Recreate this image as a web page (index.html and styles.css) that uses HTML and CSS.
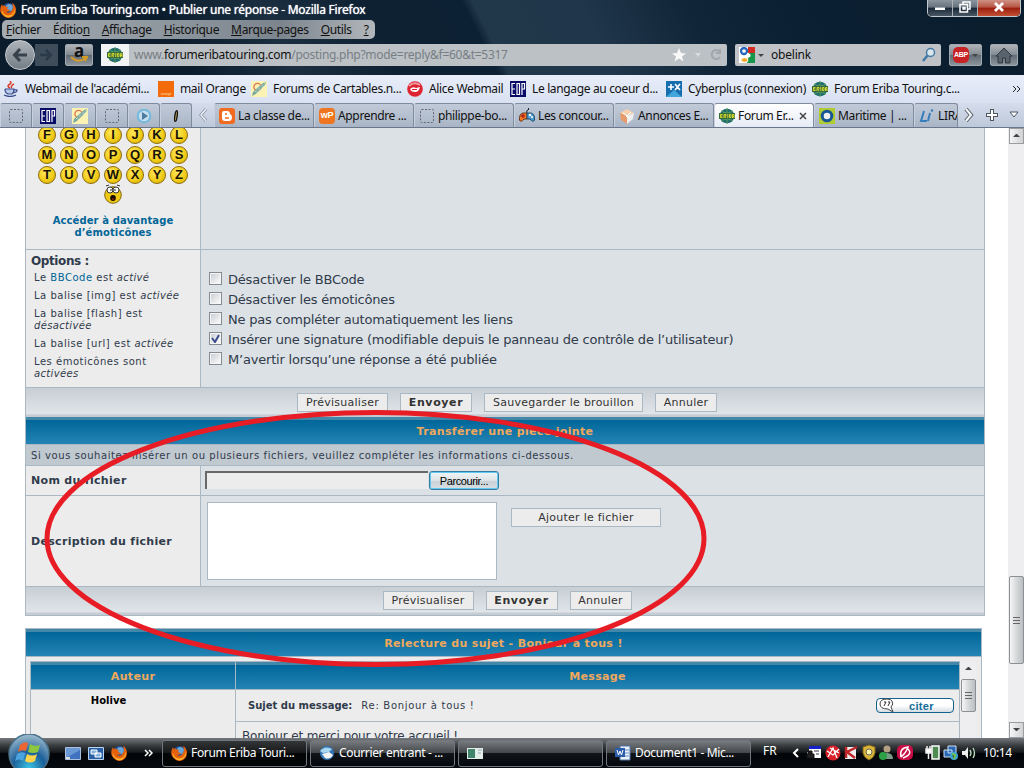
FILE: index.html
```html
<!DOCTYPE html>
<html lang="fr">

<head>
    <meta charset="UTF-8">
    <title>Forum Eriba Touring.com • Publier une réponse</title>
    <link rel="stylesheet" href="styles.css">
</head>

<body>
    <svg class="sprite">
        <symbol id="firefox" viewBox="0 0 16 16">
            <circle cx="8.4" cy="7.5" r="6.4" fill="#234c8d"/>
            <circle cx="9.3" cy="5.6" r="3.6" fill="#69a5d7"/>
            <path d="M2 2Q-1 7 1 11Q4 16 9 16Q16 15 16 7Q15 2 12 1Q14 5 12 8Q10 12 6 10Q9 10 10 8L7 7L8 5Q5 5 4 3Q3 4 3 5Z" fill="#e5610b"/>
            <path d="M2 8Q3 13 8 13.500Q13 14 15 7Q16 11 12 14Q7 17 3 12.500Q1 10 2 8" fill="#ffb52c"/>
        </symbol>
        <symbol id="eriba" viewBox="0 0 16 16">
            <circle cx="8" cy="8" r="7.3" fill="#1f6d6d"/>
            <path d="M8 0V16M2 3Q8 7 14 3M2 13Q8 9 14 13" fill="none" stroke="#5a9b60"/>
            <path d="M0 5H16V11H0Z" fill="#386b3a"/>
            <path d="M3.500 6.500H1.500V9.500H3.500M1.500 8H3.500M5 10V6.500H7V8H5.500L7 10M8.800 6V10M10.500 6.500V9.500H12V6.500ZM13.500 10V6.500H15V10M13.500 8.500H15" fill="none" stroke="#dfdf32" stroke-width=".9"/>
        </symbol>
        <symbol id="blank" viewBox="0 0 16 16">
            <rect x="1.5" y="1.5" width="13" height="13" rx="1" fill="none" stroke="#5f6874" stroke-dasharray="2 1.5"/>
        </symbol>
        <symbol id="edp" viewBox="0 0 16 16">
            <path d="M0 0H16V16H0Z" fill="#080c68"/>
            <path d="M5 2.5H2V13.5H5M2 8H5M7 2.5V13.5H9.5V2.5ZM12 14V2.5H14.5V8H12" fill="none" stroke="#fff" stroke-width="1.2"/>
        </symbol>
        <symbol id="pencil" viewBox="0 0 16 16">
            <path d="M0 0H16V16H0Z" fill="#fbf3b4"/>
            <circle cx="6.500" cy="6" r="3.6" fill="none" stroke="#df7850" stroke-width="1.3"/>
            <path d="M1 15L2 11L12 2L15 1L14 4L5 13Z" fill="#7aa99c"/>
            <path d="M4 11L14 2M5 12.500L14 4" stroke="#dceae3" stroke-dasharray="1 1"/>
        </symbol>
        <symbol id="java" viewBox="0 0 16 16">
            <path d="M7 7Q3 5 7 3Q9 2 7 0M9 7Q7 5 11 3" fill="none" stroke="#d93c2b" stroke-width="1.5"/>
            <path d="M2 8H11Q11 12 9 13H5Q2 12 2 8M11 9Q16 8 13 11L10 12M1 14Q7 17 13 14" fill="#b9c9ea" stroke="#394c8c" stroke-width="1.2"/>
        </symbol>
        <symbol id="play" viewBox="0 0 16 16">
            <circle cx="8" cy="8" r="6.3" fill="#c4deed" stroke="#74b9dc" stroke-width="2"/>
            <path d="M6 4L12 8L6 12Z" fill="#4d7c9f"/>
        </symbol>
        <symbol id="blogger" viewBox="0 0 16 16">
            <rect width="16" height="16" rx="3" fill="#f16b22"/>
            <path d="M5 3H8Q11 3 11 6Q13 7 13 9Q13 13 10 13H6Q3 13 3 10V5Q3 3 5 3" fill="#fff"/>
            <path d="M6 6H8M6 10H10" stroke="#f16b22" stroke-width="1.5"/>
        </symbol>
        <symbol id="gamepad" viewBox="0 0 16 16">
            <path d="M8 5Q7 2 9 2Q11 1 9 0" fill="none" stroke="#222"/>
            <path d="M8 5H4Q0 6 .5 12Q2 15 5 11H8Z" fill="#f07a25" stroke="#67351f"/>
            <path d="M8 5H12Q16 6 15.5 12Q14 15 11 11H8Z" fill="#4b9ed1" stroke="#244b6b"/>
            <path d="M2 8H6M4 6V10" stroke="#b4261c" stroke-width="1.5"/>
            <circle cx="11" cy="7" r="1.2" fill="#fff"/><circle cx="13" cy="9" r="1" fill="#fff"/>
        </symbol>
        <symbol id="cube" viewBox="0 0 16 16">
            <path d="M1 5L8 1L15 5L8 8Z" fill="#f8d0ae"/>
            <path d="M1 5L8 8V16L2 12Z" fill="#e79a6a"/>
            <path d="M15 5L8 8V16L14 11Z" fill="#eee"/>
            <path d="M4 5L11 10M12 4L7 9" stroke="#fff"/>
        </symbol>
        <symbol id="plusx" viewBox="0 0 16 16">
            <path d="M0 0H16V16H0Z" fill="#176eae"/>
            <path d="M0 16L8 9L16 16Z" fill="#42a6da"/>
            <path d="M2 6H8M5 3V9M9 3L14 9M14 3L9 9" stroke="#fff" stroke-width="1.6"/>
        </symbol>
        <symbol id="alice" viewBox="0 0 16 16">
            <circle cx="8" cy="8" r="7.8" fill="#dd2432"/>
            <path d="M2 5Q7 0 13 4" fill="none" stroke="#f19b9c" stroke-width="2"/>
            <path d="M3 8Q6 5 9 7L13 6Q12 11 8 11Q4 11 3 8" fill="#fff"/>
            <path d="M5 8.500H10" stroke="#dd2432"/>
        </symbol>
        <symbol id="google" viewBox="0 0 16 16">
            <path d="M0 0H16V16H0Z" fill="#fff"/>
            <path d="M9 0H16V6H9Z" fill="#d52b25"/><path d="M10 6H16V16H8Z" fill="#15964a"/>
            <circle cx="5" cy="4" r="3" fill="#fff" stroke="#2866ba" stroke-width="2.3"/>
            <path d="M8 7Q13 8 9 10" fill="none" stroke="#fff" stroke-width="2"/>
            <ellipse cx="5.5" cy="13" rx="3.5" ry="2.3" fill="#f5a623" stroke="#fff"/>
        </symbol>
        <symbol id="shocked" viewBox="0 0 18 20">
            <circle cx="9" cy="11" r="8.3" fill="#edc815" stroke="#84670a"/>
            <circle cx="6" cy="6" r="3" fill="#fff" stroke="#333"/><circle cx="12" cy="6" r="3" fill="#fff" stroke="#333"/>
            <circle cx="7" cy="6" r=".8"/><circle cx="11" cy="6" r=".8"/>
            <path d="M2 2L5 1M13 1L16 2" stroke="#333"/>
            <ellipse cx="9" cy="14" rx="2.8" ry="3" fill="#160800"/><path d="M8 15H10" stroke="#c52e15"/>
        </symbol>
    </svg>

    <div class="chrome">
        <div class="titlebar">
            <svg class="icon"><use href="#firefox"/></svg>
            <span class="window-title">Forum Eriba Touring.com • Publier une réponse - Mozilla Firefox</span>
            <div class="window-buttons">
                <span><svg width="14" height="14"><path d="M2 7.5H12V10H2Z" fill="#fff"/></svg></span>
                <span><svg width="14" height="14" fill="none" stroke="#fff" stroke-width="1.5"><path d="M5 4V2H12V9H10M2 4.500H9.500V12H2ZM5 7.500H7V9H5Z"/></svg></span>
                <span class="close"><svg width="14" height="14"><path d="M3 3L11 11M11 3L3 11" stroke="#fff" stroke-width="2.800"/></svg></span>
            </div>
        </div>
        <div class="menubar">
            <span><u>F</u>ichier</span><span>Éditio<u>n</u></span><span><u>A</u>ffichage</span><span><u>H</u>istorique</span><span><u>M</u>arque-pages</span><span><u>O</u>utils</span><span><u>?</u></span>
        </div>
        <div class="navbar">
            <div class="nav-arrows">
                <span class="back"><svg width="18" height="18"><path d="M16 9H4M9 3L3.500 9L9 15" fill="none" stroke="#38424c" stroke-width="3"/></svg></span>
                <span class="forward"><svg width="16" height="16"><path d="M2 8H12M8 3L13 8L8 13" fill="none" stroke="#2b3a48" stroke-width="2.500"/></svg></span>
            </div>
            <div class="tool amazon"><b>a</b><svg width="18" height="8"><path d="M1 1Q8 8 16 2M12 1H17L15 5" fill="none" stroke="#d49b26" stroke-width="2"/></svg></div>
            <div class="urlbar">
                <div class="site"><svg class="icon"><use href="#eriba"/></svg></div>
                <span class="url">www.<b>forumeribatouring.com</b>/posting.php?mode=reply&amp;f=60&amp;t=5317</span>
                <svg class="url-icons" width="56" height="18"><path d="M8 2L10 7L15 7.500L11 10.500L12.500 15.500L8 12.500L3.500 15.500L5 10.500L1 7.500L6 7Z" fill="#f8f8f8"/><path d="M24 7H30L27 11Z" fill="#d9dcde"/><path d="M48 5A4.500 4.500 0 1 0 49 11M49 3V7H45" fill="none" stroke="#a0a6ac" stroke-width="2"/></svg>
            </div>
            <div class="search">
                <svg class="icon"><use href="#google"/></svg><i class="caret"></i><span>obelink</span>
                <svg width="16" height="16"><circle cx="9.500" cy="5.500" r="4" fill="#dbe5ec" stroke="#4379a5" stroke-width="1.500"/><path d="M6.500 8.500L2 14" stroke="#4379a5" stroke-width="2.500"/></svg>
            </div>
            <div class="tool abp"><b>ABP</b><i class="caret"></i></div>
            <div class="tool home"><svg width="18" height="17"><path d="M1 9L9 1L17 9H15V16H10.500V11H7.500V16H3V9Z" fill="#59636d" stroke="#303943"/></svg></div>
        </div>
    </div>

    <div class="bookmarks">
        <div><svg class="icon"><use href="#java"/></svg><span>Webmail de l'académi...</span></div>
        <div><i class="orange">orange</i><span>mail Orange</span></div>
        <div><svg class="icon"><use href="#pencil"/></svg><span>Forums de Cartables.n...</span></div>
        <div><svg class="icon"><use href="#alice"/></svg><span>Alice Webmail</span></div>
        <div><svg class="icon"><use href="#edp"/></svg><span>Le langage au coeur d...</span></div>
        <div><svg class="icon"><use href="#plusx"/></svg><span>Cyberplus (connexion)</span></div>
        <div><svg class="icon"><use href="#eriba"/></svg><span>Forum Eriba Touring.c...</span></div>
        <svg class="more" width="9" height="9"><path d="M1 1L4 4L1 7M5 1L8 4L5 7" fill="none" stroke="#222"/></svg>
    </div>

    <div class="tabs">
        <div class="pin"><svg class="icon"><use href="#blank"/></svg></div>
        <div class="pin"><svg class="icon"><use href="#edp"/></svg></div>
        <div class="pin"><svg class="icon"><use href="#pencil"/></svg></div>
        <div class="pin"><svg class="icon"><use href="#blank"/></svg></div>
        <div class="pin"><svg class="icon"><use href="#play"/></svg></div>
        <div class="pin"><svg width="16" height="16"><ellipse cx="8" cy="8" rx="1.200" ry="5.500" fill="#b69e55" stroke="#111" stroke-width="1.300" transform="rotate(8 8 8)"/></svg></div>
        <div class="scroll-left"><svg width="12" height="16"><path d="M9 2L4 8L9 14" fill="none" stroke="#8791a0" stroke-width="3"/><path d="M9 2L4 8L9 14" fill="none" stroke="#edf1f7" stroke-width="1.500"/></svg></div>
        <div class="tab"><svg class="icon"><use href="#blogger"/></svg><span>La classe de...</span></div>
        <div class="tab"><i class="wp">wP</i><span>Apprendre ...</span></div>
        <div class="tab"><svg class="icon"><use href="#blank"/></svg><span>philippe-bo...</span></div>
        <div class="tab"><svg class="icon"><use href="#gamepad"/></svg><span>Les concour...</span></div>
        <div class="tab"><svg class="icon"><use href="#cube"/></svg><span>Annonces E...</span></div>
        <div class="tab active"><svg class="icon"><use href="#eriba"/></svg><span>Forum Er...</span><svg class="tab-close" width="8" height="8"><path d="M1 1L7 7M7 1L1 7" stroke="#444" stroke-width="1.500"/></svg></div>
        <div class="tab"><svg class="icon" viewBox="0 0 16 16"><path d="M0 0H16V16H0Z" fill="#b1cc32"/><circle cx="8" cy="8" r="4.800" fill="#eee" stroke="#185693" stroke-width="3"/></svg><span>Maritime | ...</span></div>
        <div class="tab cut"><svg class="icon" viewBox="0 0 16 16"><path d="M5 3L2 13H8M11 5L9 13M12 2L14 3" fill="none" stroke="#367dbc" stroke-width="2"/></svg><span>LIRA</span></div>
        <svg class="tab-tools" width="66" height="25"><path d="M8 6L13 12L8 18" fill="none" stroke="#59616c" stroke-width="4"/><path d="M8 6L13 12L8 18" fill="none" stroke="#f7f9fc" stroke-width="2"/><path d="M28 12H40M34 6V18" stroke="#4d5661" stroke-width="4"/><path d="M29 12H39M34 7V17" stroke="#fff" stroke-width="2"/><path d="M52 9H60L56 14Z" fill="#fff" stroke="#4d5661"/></svg>
    </div>

    <div class="viewport">
        <div class="page">
            <div class="post-form">
                <div class="row smilies-row">
                    <div class="label smilies">
                        <div class="balls">
                            <b>F</b><b>G</b><b>H</b><b>I</b><b>J</b><b>K</b><b>L</b>
                            <b>M</b><b>N</b><b>O</b><b>P</b><b>Q</b><b>R</b><b>S</b>
                            <b>T</b><b>U</b><b>V</b><b>W</b><b>X</b><b>Y</b><b>Z</b>
                        </div>
                        <svg class="shocked" width="18" height="20"><use href="#shocked"/></svg>
                        <a class="more-smilies">Accéder à davantage<br>d’émoticônes</a>
                    </div>
                    <div class="field"></div>
                </div>
                <div class="row options-row">
                    <div class="label options">
                        <h4>Options :</h4>
                        <p>Le <a>BBCode</a> est <em>activé</em></p>
                        <p>La balise [img] est <em>activée</em></p>
                        <p>La balise [flash] est<br><em>désactivée</em></p>
                        <p>La balise [url] est <em>activée</em></p>
                        <p>Les émoticônes sont<br><em>activées</em></p>
                    </div>
                    <div class="field checks">
                        <label><i class="box"></i>Désactiver le BBCode</label>
                        <label><i class="box"></i>Désactiver les émoticônes</label>
                        <label><i class="box"></i>Ne pas compléter automatiquement les liens</label>
                        <label><i class="box"><svg width="9" height="9"><path d="M1 4L4 8L8 1" fill="none" stroke="#3b4d8e" stroke-width="2"/></svg></i>Insérer une signature (modifiable depuis le panneau de contrôle de l’utilisateur)</label>
                        <label><i class="box"></i>M’avertir lorsqu’une réponse a été publiée</label>
                    </div>
                </div>
                <div class="actions first">
                    <button class="w-preview">Prévisualiser</button>
                    <button class="w-send">Envoyer</button>
                    <button class="w-draft">Sauvegarder le brouillon</button>
                    <button class="w-cancel">Annuler</button>
                </div>
                <div class="heading">Transférer une pièce jointe</div>
                <div class="info">Si vous souhaitez insérer un ou plusieurs fichiers, veuillez compléter les informations ci-dessous.</div>
                <div class="row file-row">
                    <div class="label"><b>Nom du fichier</b></div>
                    <div class="field"><div class="file-input"></div><button class="browse">Parcourir...</button></div>
                </div>
                <div class="row desc-row">
                    <div class="label"><b>Description du fichier</b></div>
                    <div class="field"><div class="textarea"></div><button class="add-file">Ajouter le fichier</button></div>
                </div>
                <div class="actions last">
                    <button class="w-preview">Prévisualiser</button>
                    <button class="w-send">Envoyer</button>
                    <button class="w-cancel">Annuler</button>
                </div>
            </div>

            <div class="review">
                <div class="heading">Relecture du sujet - Bonjour à tous !</div>
                <div class="review-body">
                    <div class="topic">
                        <div class="author">
                            <div class="heading">Auteur</div>
                            <b>Holive</b>
                        </div>
                        <div class="message">
                            <div class="heading">Message</div>
                            <div class="subject">
                                <b>Sujet du message:</b><span>Re: Bonjour à tous !</span>
                                <div class="quote"><svg width="18" height="16"><path d="M8 1Q1 1 1 6Q1 11 9 11L14 14L12 9Q15 6 13 3Q12 1 8 1Z" fill="#fff" stroke="#444"/><path d="M5 4H7L5 8M9 4H11L9 8" fill="none" stroke="#333"/></svg>citer</div>
                            </div>
                            <p>Bonjour et merci pour votre accueil !</p>
                        </div>
                    </div>
                    <div class="scrollbar inner">
                        <div class="arrow up"></div>
                        <div class="thumb"></div>
                    </div>
                </div>
            </div>
        </div>
        <div class="scrollbar outer">
            <div class="arrow up"></div>
            <div class="thumb"></div>
            <div class="arrow down"></div>
        </div>
    </div>

    <div class="taskbar">
        <svg class="start" width="44" height="34" viewBox="0 0 44 34">
            <defs><radialGradient id="orb" cx=".5" cy=".85" r=".8"><stop offset="0" stop-color="#39c5e6"/><stop offset=".5" stop-color="#1c5f99"/><stop offset="1" stop-color="#94b5c9"/></radialGradient></defs>
            <circle cx="22" cy="20" r="20" fill="url(#orb)" stroke="#49718a" stroke-width="1.500"/>
            <path d="M13 11Q17 7 21 9L19 17Q15 15 11 18Z" fill="#ec6533"/><path d="M23 10Q27 13 33 11L31 18Q26 20 21 18Z" fill="#8dc641"/>
            <path d="M10 20Q14 17 18.500 19L16 27Q12 24 8 27Z" fill="#4ba3df"/><path d="M20 20Q25 23 30 20L28 27Q23 30 18 27Z" fill="#ffd34b"/>
        </svg>
        <div class="quick">
            <svg width="16" height="13"><path d="M.5.5H15.500V12.500H.5Z" fill="#3f71bf" stroke="#a8c1df"/><path d="M1 11L15 3V1H1Z" fill="#6998d5"/><path d="M1 10H5V12H1Z" fill="#ddd"/></svg>
            <svg width="16" height="13"><path d="M.5.5H15.500V12.500H.5Z" fill="#2b5fa5" stroke="#b8d3f0"/><path d="M3 3H9V7H3ZM7 6H13V10H7Z" fill="#82b1df" stroke="#fff"/></svg>
            <svg class="icon"><use href="#firefox"/></svg>
        </div>
        <svg class="more" width="9" height="9"><path d="M1 1L4 4L1 7M5 1L8 4L5 7" fill="none" stroke="#fff" stroke-width="1.500"/></svg>
        <div class="tasks">
            <div class="task current"><svg class="icon"><use href="#firefox"/></svg><span>Forum Eriba Touri...</span></div>
            <div class="task"><svg class="icon" viewBox="0 0 16 16"><circle cx="8" cy="8" r="7" fill="#3376b6"/><path d="M1 6Q6 0 13 4L10 7L4 8Z" fill="#a7d7ef"/><path d="M3 9L10 7L14 10Q11 15 6 13Z" fill="#f4f4f4"/></svg><span>Courrier entrant - ...</span></div>
            <div class="task"><svg class="icon" viewBox="0 0 16 16"><path d="M0 3H16V14H0Z" fill="#e4eee9"/><path d="M1 4H8V13H1Z" fill="#41856d"/><path d="M11 5H15M11 8H14" stroke="#9ab"/></svg></div>
            <div class="task"><svg class="icon" viewBox="0 0 16 16"><path d="M5 1H15V15H5Z" fill="#eaf1fb" stroke="#5076ad"/><path d="M8 5H14M8 8H14M8 11H14" stroke="#6e91c4"/><path d="M0 3H10V12H0Z" fill="#2a5caa"/><path d="M2 5L3.500 10L5 6L6.500 10L8 5" fill="none" stroke="#fff"/></svg><span>Document1 - Mic...</span></div>
        </div>
        <span class="lang">FR</span>
        <svg class="tray" width="192" height="20">
            <path d="M10 6L6 10L10 14" fill="none" stroke="#fff" stroke-width="2"/>
            <path d="M21 3H33V15H19V9H21Z" fill="#fff"/><path d="M21 3H33V6H21Z" fill="#1522c8"/><path d="M20 11V8H24V11M19 11H26V15H19Z" fill="#222" stroke="#111"/><path d="M26 8H31M28 11H31" stroke="#334"/>
            <circle cx="45" cy="10" r="7.500" fill="#d91f29"/><path d="M39 8L45 12L51 6M40 14L45 5L49 15M42 5L51 10" fill="none" stroke="#fff" stroke-width="1.300"/>
            <path d="M57 4H68V16H57Z" fill="#ededed"/><path d="M58 4V15M69 4L59 9L67 15" fill="none" stroke="#bf2526" stroke-width="2.500"/>
            <path d="M75 4L81 2L87 4V10Q86 15 81 17Q76 15 75 10Z" fill="#d9b53c" stroke="#80661c"/><circle cx="81" cy="9" r="3" fill="#fff4ae" stroke="#665"/>
            <circle cx="99" cy="6" r="3.500" fill="#b2a083"/><path d="M92 16Q93 10 99 10Q105 10 105 16Z" fill="#789c86"/><circle cx="95" cy="13" r="4" fill="#2ba044"/>
            <rect x="109" y="2" width="16" height="15" rx="5" fill="#c80e44"/><path d="M113 14Q111 5 120 4Q118 10 113 14M119 5Q126 11 115 15" fill="none" stroke="#fff" stroke-width="1.500"/>
            <path d="M144 3H151V16H144Z" fill="#4f8a50" stroke="#fff" stroke-width="1.500"/><path d="M139 3V6M142 3V6M138 6H143V10H138ZM140.500 10V16" fill="#fff" stroke="#eee" stroke-width="1.500"/>
            <path d="M160 3H168V10H160ZM156 7H164V14H156Z" fill="#2865b2" stroke="#cfe2f5"/><circle cx="166" cy="13" r="4" fill="#3ba2d6"/><path d="M164 11L167 12L166 16" stroke="#75c34a" stroke-width="2"/>
            <path d="M174 8H177L180 4V16L177 12H174Z" fill="#eee"/><path d="M182 7Q184 10 182 13M185 5Q188 10 185 15" fill="none" stroke="#bce5c2" stroke-width="1.300"/>
        </svg>
        <span class="clock">10:14</span>
    </div>

    <svg class="marker" width="1024" height="768"><ellipse cx="375.500" cy="538.500" rx="328.500" ry="126" fill="none" stroke="#e81c24" stroke-width="5"/></svg>
</body>

</html>
```

FILE: styles.css
```css
* {
    box-sizing: border-box;
}

body {
    margin: 0;
    width: 1024px;
    height: 768px;
    overflow: hidden;
    position: relative;
    background: #fff;
    font-family: "Noto Sans", "Open Sans", sans-serif;
    font-size: 12px;
    line-height: 16px;
    color: #111;
    white-space: nowrap;
}

svg {
    display: block;
    flex-shrink: 0;
}

i {
    font-style: normal;
}

.sprite {
    position: absolute;
    width: 0;
    height: 0;
}

.icon {
    width: 16px;
    height: 16px;
}

.caret {
    width: 0;
    height: 0;
    border: 3px solid transparent;
    border-top-color: #444;
    border-bottom: 0;
}

/* browser window */
.chrome {
    height: 75px;
    background: linear-gradient(63deg, #0b1d2d 0 18%, #1b2f40 28%, #0d2133 38%, #0c2133 47%, #21374a 48%, #20364a 58%, #102538 68%, #0b2033 78%, #0a1d2d);
}

.titlebar {
    height: 20px;
    display: flex;
    align-items: center;
    color: #fff;
}

.window-title {
    margin-left: 5px;
    letter-spacing: -0.23px;
    text-shadow: 0 0 1px #fff;
}

.window-buttons {
    margin-left: auto;
    margin-right: 3px;
    align-self: flex-start;
    display: flex;
    height: 17px;
    border: 1px solid #c1c8cf;
    border-top: 0;
    border-radius: 0 0 5px 5px;
    overflow: hidden;
}

.window-buttons span {
    width: 25px;
    display: flex;
    justify-content: center;
    background: linear-gradient(#8b959e, #65717c 45%, #182737 50%, #4a5865);
    border-right: 1px solid #aab1b8;
}

.window-buttons .close {
    width: 42px;
    background: linear-gradient(#ce9184, #b75443 45%, #9b1d0d 50%, #c25034);
    border: 0;
}

.menubar {
    width: 373px;
    height: 19px;
    margin-left: 2px;
    padding-left: 4px;
    display: flex;
    gap: 12px;
    align-items: center;
    background: linear-gradient(90deg, #a4abb1, #9098a0 40%, #7c858e 75%, #b2b7bb);
    border-radius: 5px;
    letter-spacing: -0.35px;
}

.navbar {
    display: flex;
    align-items: center;
    height: 32px;
    padding-left: 5px;
}

.nav-arrows {
    display: flex;
    align-items: center;
    width: 60px;
}

.back {
    width: 30px;
    height: 30px;
    border: 1px solid #c8cdd1;
    border-radius: 50%;
    background: linear-gradient(#adb3b9, #747e87);
    display: flex;
    align-items: center;
    justify-content: center;
}

.forward {
    width: 23px;
    height: 22px;
    padding: 3px;
    background: #3f4d5a;
}

.tool {
    height: 22px;
    background: linear-gradient(#aeb3b8, #838b92 48%, #606a74 50%, #8d949b);
    border: 1px solid #a0a8b0;
    border-radius: 2px;
    display: flex;
    align-items: center;
    justify-content: center;
}

.amazon {
    width: 28px;
    flex-direction: column;
}

.amazon b {
    font-size: 17px;
    line-height: 10px;
}

.urlbar {
    width: 626px;
    height: 22px;
    margin-left: 8px;
    display: flex;
    align-items: center;
    background: #bcc1c5;
    border-radius: 2px;
}

.site {
    width: 28px;
    height: 22px;
    padding: 3px 6px;
    background: #f1f3f5;
}

.url {
    margin-left: 5px;
    color: #777e84;
    letter-spacing: -0.28px;
}

.url b {
    font-weight: normal;
    color: #111;
}

.url-icons {
    margin-left: auto;
}

.search {
    width: 206px;
    height: 22px;
    margin-left: 8px;
    padding: 0 4px;
    display: flex;
    align-items: center;
    background: #bfc3c7;
    border-radius: 2px;
}

.search .caret {
    margin: 0 7px 0 3px;
}

.search span {
    flex: 1;
    letter-spacing: -0.2px;
}

.abp {
    width: 33px;
    margin-left: 8px;
    gap: 3px;
}

.abp b {
    width: 16px;
    height: 16px;
    border-radius: 5px;
    background: #c72224;
    color: #fff;
    font: bold 7px/16px "Liberation Sans", sans-serif;
    text-align: center;
    letter-spacing: -0.3px;
}

.home {
    width: 28px;
    margin-left: 8px;
}

.bookmarks {
    height: 28px;
    padding-left: 3px;
    display: grid;
    grid-template-columns: 155px 93px 156px 103px 156px 146px 200px 1fr;
    align-items: center;
    background: linear-gradient(#e8edf9, #d9e1f1);
    letter-spacing: -0.35px;
}

.bookmarks div {
    display: flex;
    align-items: center;
    gap: 6px;
}

.orange {
    width: 16px;
    height: 16px;
    background: #f36b0a;
    color: #ffd6a8;
    font: 4px/26px "Liberation Sans", sans-serif;
    text-align: center;
}

.tabs {
    height: 25px;
    display: flex;
    background: linear-gradient(#d5ddec, #bdc8d9);
    border-bottom: 1px solid #68778b;
}

.pin,
.tab {
    border: 1px solid #7f8c9e;
    border-left-color: #c7d0dc;
    border-bottom: 0;
    border-radius: 3px 3px 0 0;
    background: linear-gradient(#c1cad8, #a9b5c6);
    display: flex;
    align-items: center;
}

.pin {
    width: 32px;
    justify-content: center;
}

.scroll-left {
    width: 22px;
    padding: 4px 5px;
}

.tab {
    width: 100px;
    padding-left: 4px;
    gap: 3px;
    overflow: hidden;
    letter-spacing: -0.35px;
}

.tab.active {
    background: linear-gradient(#fff, #e6ebf5);
}

.tab-close {
    margin-left: auto;
    margin-right: 6px;
}

.tab.cut {
    width: 44px;
}

.wp {
    width: 16px;
    height: 16px;
    border-radius: 4px;
    background: #ef7620;
    color: #fff;
    font: bold 9px/15px "Liberation Sans", sans-serif;
    text-align: center;
}

/* forum page */
.viewport {
    height: 610px;
    display: flex;
    overflow: hidden;
    font-family: "DejaVu Sans", Verdana, sans-serif;
    color: #303b4b;
}

.page {
    width: 1008px;
    padding-left: 25px;
    overflow: hidden;
}

.post-form {
    width: 960px;
    height: 488px;
    border: 1px solid #a9b8c2;
    border-top: 0;
}

.row {
    display: flex;
    border-bottom: 1px solid #a9b8c2;
}

.label {
    width: 175px;
    background: #ececec;
    border-right: 1px solid #a9b8c2;
    flex-shrink: 0;
}

.field {
    flex: 1;
    background: #dce1e5;
}

.smilies-row {
    height: 122px;
}

.smilies {
    display: flex;
    flex-direction: column;
    align-items: center;
}

.balls {
    display: grid;
    grid-template-columns: repeat(7, 18px);
    gap: 2px 4px;
    margin-top: -2px;
}

.balls b {
    height: 18px;
    border: 1px solid #8b6b0c;
    border-radius: 50%;
    background: radial-gradient(circle at 40% 35%, #ffe95d, #efc914 60%, #cda000);
    color: #181205;
    font: bold 13px/16px "Liberation Sans", sans-serif;
    text-align: center;
}

.shocked {
    flex-shrink: 0;
}

.more-smilies {
    margin-top: 11px;
    color: #006597;
    font-size: 10px;
    font-weight: bold;
    line-height: 12px;
    letter-spacing: 0.1px;
    text-align: center;
}

.options-row {
    height: 138px;
}

.options h4 {
    margin: 5px 0 4px 5px;
    font-size: 12px;
    line-height: 13px;
    letter-spacing: -0.4px;
}

.options p {
    margin: 0 0 6px 8px;
    font-size: 10px;
    line-height: 12px;
    letter-spacing: 0.52px;
}

.options em {
    letter-spacing: 0.35px;
}

.options a {
    color: #006597;
}

.checks {
    padding: 19px 0 0 8px;
    font-size: 13px;
    letter-spacing: -0.2px;
}

.checks label {
    display: flex;
    align-items: center;
    height: 20px;
    padding-top: 1px;
}

.box {
    width: 13px;
    height: 13px;
    margin: -2px 6px 0 0;
    padding: 1px;
    border: 1px solid #858b90;
    background: linear-gradient(135deg, #c7cbd0, #fff);
    box-shadow: inset 0 0 0 1px #f5f5f5;
}

.actions {
    display: flex;
    justify-content: center;
    gap: 12px;
    background: linear-gradient(#c7ced4, #e0e5e9 90%, #c5ccd3 92%);
}

.actions.first {
    height: 29px;
    padding: 5px 0 0 4px;
}

.actions.last {
    height: 28px;
    padding: 4px 0 0 4px;
}

button {
    height: 19px;
    padding: 1px 0 0;
    border: 1px solid #a9b8c2;
    background: #ececec;
    color: #333;
    font: 11px/16px "DejaVu Sans", Verdana, sans-serif;
    letter-spacing: 0.25px;
}

.w-preview {
    width: 91px;
}

.w-send {
    width: 72px;
    font-weight: bold;
    letter-spacing: 0.6px;
}

.w-draft {
    width: 159px;
}

.w-cancel {
    width: 62px;
}

.heading {
    height: 28px;
    background: linear-gradient(#006699, #2384b4);
    border-top: 3px solid #4388a8;
    border-bottom: 1px solid #a9b8c2;
    color: #f0a85c;
    font-size: 11px;
    font-weight: bold;
    line-height: 24px;
    letter-spacing: 0.35px;
    text-align: center;
}

.info {
    height: 21px;
    padding-left: 5px;
    background: #c0c8d0;
    border-bottom: 1px solid #a9b8c2;
    font-size: 10px;
    line-height: 21px;
    letter-spacing: 0.58px;
}

.file-row {
    height: 30px;
}

.file-row .label,
.desc-row .label {
    display: flex;
    align-items: center;
    padding: 1px 0 0 5px;
    font-size: 11px;
    letter-spacing: 0.32px;
}

.file-row .field {
    display: flex;
    padding: 5px 0 0 4px;
}

.file-input {
    width: 223px;
    height: 18px;
    background: #ececec;
    border-top: 2px solid #686868;
    border-left: 2px solid #686868;
}

.browse {
    width: 70px;
    margin-left: 1px;
    border: 1px solid #397ca2;
    border-radius: 3px;
    background: linear-gradient(#f2f5f6, #dce3e6 50%, #c7d1d7 52%, #d8e0e4);
    box-shadow: inset 0 0 0 1px #61c8ef;
    color: #000;
    font: 11px "Liberation Sans", Arial, sans-serif;
    letter-spacing: -0.4px;
}

.desc-row {
    height: 91px;
}

.desc-row .field {
    display: flex;
    padding: 6px;
}

.textarea {
    width: 290px;
    height: 78px;
    background: #fff;
    border: 1px solid #a9b8c2;
}

.add-file {
    width: 150px;
    margin: 6px 0 0 14px;
}

.review {
    width: 957px;
    height: 130px;
    margin-top: 12px;
    border: 1px solid #a9b8c2;
    background: #ececec;
}

.review-body {
    display: flex;
    padding: 4px 4px 0;
}

.topic {
    width: 930px;
    display: flex;
    border: 1px solid #a9b8c2;
}

.author {
    width: 205px;
    height: 100px;
    border-right: 1px solid #a9b8c2;
}

.author > b {
    display: block;
    margin: 3px 49px 0 0;
    color: #000;
    font-size: 10px;
    text-align: center;
}

.message {
    flex: 1;
}

.subject {
    height: 32px;
    padding: 0 5px 0 12px;
    border-bottom: 1px solid #a9b8c2;
    display: flex;
    align-items: center;
    font-size: 10px;
}

.subject > span {
    margin-left: 9px;
    letter-spacing: 0.7px;
}

.quote {
    width: 78px;
    height: 15px;
    margin-left: auto;
    padding-left: 2px;
    display: flex;
    align-items: center;
    gap: 12px;
    border: 1px solid #12628f;
    border-radius: 4px;
    background: linear-gradient(#fff 50%, #d6dde3);
    color: #126d9b;
    font: bold 11px "Liberation Sans", Arial, sans-serif;
    letter-spacing: 0.3px;
}

.message p {
    margin: 6px 0 0 6px;
    font-size: 12px;
    letter-spacing: -0.13px;
}

.scrollbar {
    display: flex;
    flex-direction: column;
    align-items: center;
    background: #eeeef0;
    flex-shrink: 0;
}

.scrollbar.outer {
    width: 16px;
}

.scrollbar.inner {
    width: 16px;
    height: 100px;
}

.thumb {
    width: 15px;
    height: 88px;
    border: 1px solid #8c8f93;
    border-radius: 2px;
    background: repeating-linear-gradient(#666 0 1px, transparent 1px 3px) center / 7px 7px no-repeat, linear-gradient(90deg, #f6f6f6, #d6d8da 50%, #bbbec2);
}

.outer .thumb {
    margin-top: 432px;
    margin-bottom: auto;
}

.inner .thumb {
    height: 33px;
}

.arrow {
    width: 15px;
    height: 16px;
    padding: 6px 4px;
}

.arrow::before {
    content: "";
    display: block;
    border: 3px solid transparent;
    border-top-width: 0;
    border-bottom-color: #444;
}

.outer .arrow {
    border: 1px solid #9a9da0;
    background: linear-gradient(90deg, #f5f5f5, #cfd1d3);
    padding: 5px 3px;
}

.arrow.down::before {
    border-top: 3px solid #444;
    border-bottom: 0;
}

.inner .arrow {
    height: 18px;
}

/* Vista taskbar */
.taskbar {
    height: 30px;
    display: flex;
    align-items: center;
    color: #fff;
    background: linear-gradient(#75797d, #3a3d40 25%, #15181b 48%, #020407 52%, #070b10);
}

.start {
    margin: -4px 0 0 7px;
}

.quick {
    width: 79px;
    margin-left: 14px;
    display: flex;
    align-items: center;
    gap: 7px;
}

.tasks {
    margin-left: 9px;
    display: flex;
    gap: 3px;
}

.task {
    width: 145px;
    height: 27px;
    padding-left: 8px;
    display: flex;
    align-items: center;
    gap: 4px;
    border: 1px solid #71777c;
    border-radius: 3px;
    background: linear-gradient(#777b7f, #45494c 46%, #111519 50%, #05080c);
    letter-spacing: -0.35px;
}

.task.current {
    background: linear-gradient(#333638, #151719 48%, #030507 50%);
}

.lang {
    width: 25px;
    margin: -4px 0 0 12px;
}

.clock {
    margin-left: 3px;
    letter-spacing: -0.4px;
}

.marker {
    position: absolute;
    left: 0;
    top: 0;
    pointer-events: none;
}
```
